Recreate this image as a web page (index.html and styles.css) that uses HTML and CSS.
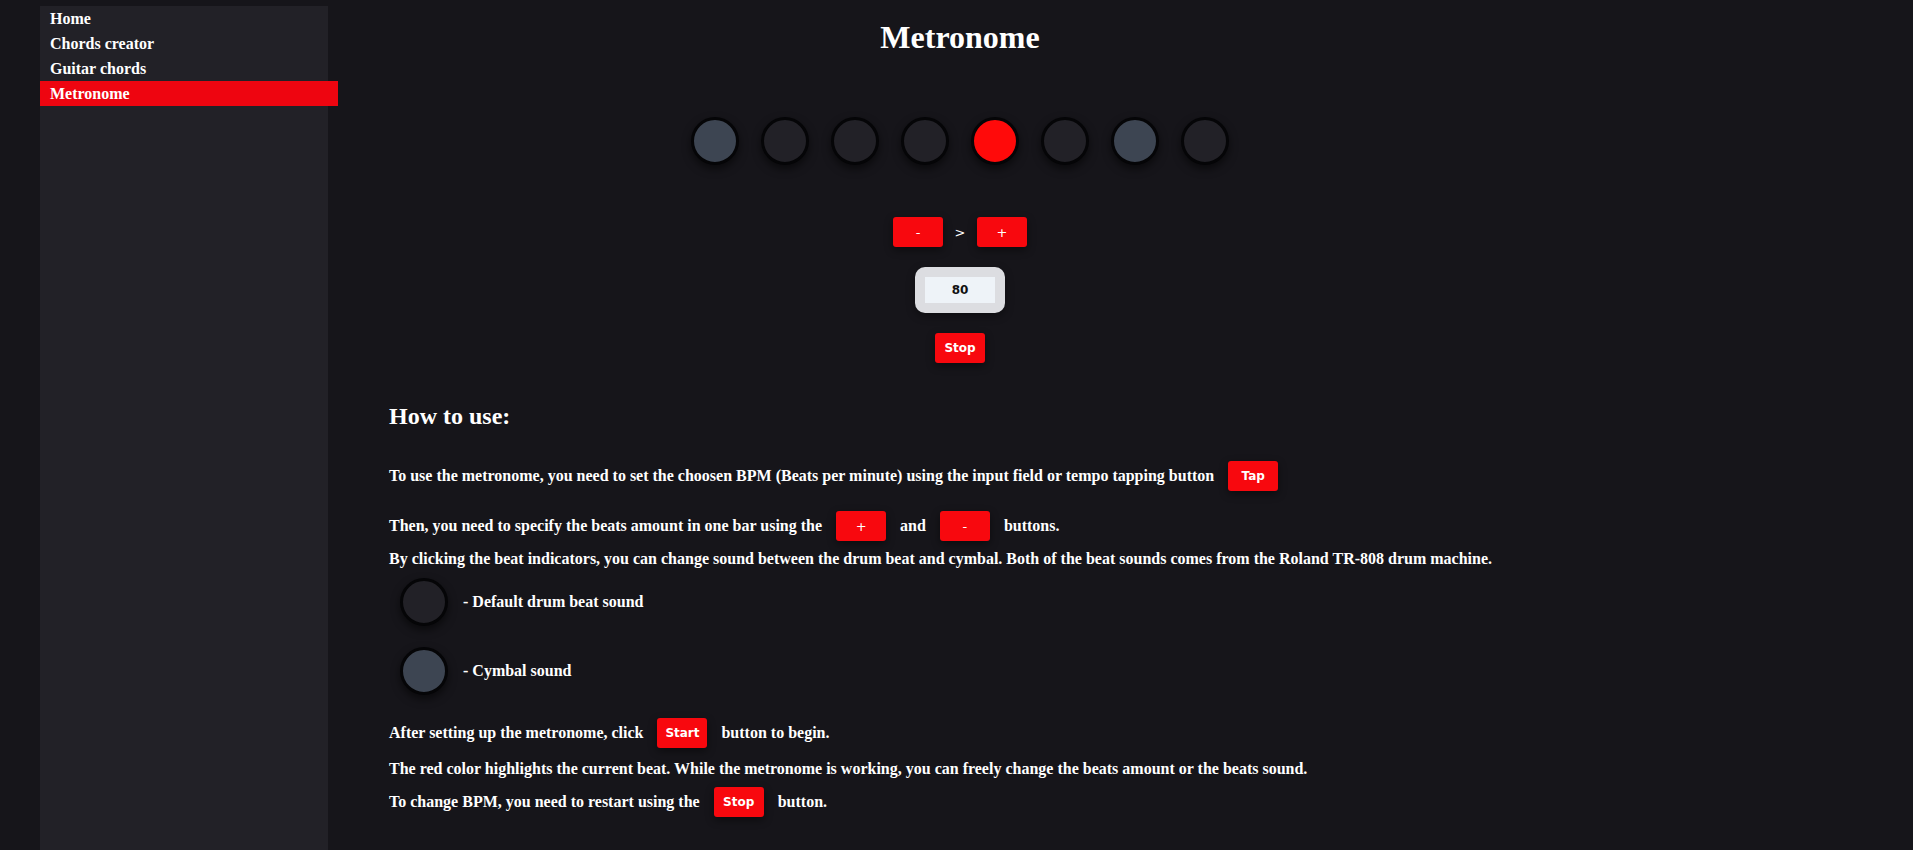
FILE: index.html
```html
<!DOCTYPE html>
<html lang="en">
<head>
<meta charset="utf-8">
<title>Metronome</title>
<link rel="stylesheet" href="styles.css">
</head>
<body>
<nav class="sidebar">
  <a class="nav-item">Home</a>
  <a class="nav-item">Chords creator</a>
  <a class="nav-item">Guitar chords</a>
  <a class="nav-item active">Metronome</a>
</nav>
<main class="main">
  <h1 class="title">Metronome</h1>
  <div class="beats">
    <span class="beat cymbal"></span>
    <span class="beat"></span>
    <span class="beat"></span>
    <span class="beat"></span>
    <span class="beat current"></span>
    <span class="beat"></span>
    <span class="beat cymbal"></span>
    <span class="beat"></span>
  </div>
  <div class="amount">
    <button class="btn thin">-</button>
    <span class="arrow">&gt;</span>
    <button class="btn thin">+</button>
  </div>
  <div class="bpm-box"><input class="bpm" type="text" value="80"></div>
  <button class="btn stop">Stop</button>

  <section class="howto">
    <h2 class="howto-title">How to use:</h2>
    <p class="line l1">To use the metronome, you need to set the choosen BPM (Beats per minute) using the input field or tempo tapping button <button class="btn inline">Tap</button></p>
    <p class="line l2">Then, you need to specify the beats amount in one bar using the <button class="btn inline thin">+</button> and <button class="btn inline thin">-</button> buttons.</p>
    <p class="line l3">By clicking the beat indicators, you can change sound between the drum beat and cymbal. Both of the beat sounds comes from the Roland TR-808 drum machine.</p>
    <div class="legend lg1"><span class="beat"></span><span>- Default drum beat sound</span></div>
    <div class="legend lg2"><span class="beat cymbal"></span><span>- Cymbal sound</span></div>
    <p class="line l4">After setting up the metronome, click <button class="btn inline">Start</button> button to begin.</p>
    <p class="line l5">The red color highlights the current beat. While the metronome is working, you can freely change the beats amount or the beats sound.</p>
    <p class="line l6">To change BPM, you need to restart using the <button class="btn inline">Stop</button> button.</p>
  </section>
</main>
</body>
</html>
```

FILE: styles.css
```css
html, body {
  margin: 0;
  padding: 0;
  height: 100%;
}
body {
  background: #16151a;
  color: #ffffff;
  font-family: "Liberation Serif", "Times New Roman", serif;
  font-weight: bold;
  display: flex;
  align-items: flex-start;
  overflow: hidden;
}
.sidebar {
  flex: 0 0 288px;
  width: 288px;
  min-width: 0;
  margin-left: 40px;
  margin-top: 6px;
  height: 844px;
  background: #222127;
  display: flex;
  flex-direction: column;
  align-items: flex-start;
}
.nav-item {
  display: block;
  height: 25px;
  line-height: 25px;
  padding-left: 10px;
  font-size: 16px;
  color: #ffffff;
}
.nav-item.active {
  background: #ee0510;
  width: 288px;
  flex: none;
}
.main {
  margin-left: 61px;
  width: 1142px;
  flex: none;
  display: flex;
  flex-direction: column;
  align-items: center;
}
.title {
  font-size: 32px;
  margin: 19px 0 0;
  line-height: 36px;
}
.beats {
  display: flex;
  gap: 22px;
  margin-top: 62px;
}
.beat {
  box-sizing: border-box;
  width: 48px;
  height: 48px;
  border-radius: 50%;
  border: 3px solid #050507;
  background: #222127;
  box-shadow: 0 4px 8px rgba(0,0,0,0.55);
  flex: 0 0 auto;
}
.beat.cymbal { background: #3d4552; }
.beat.current { background: #ff0a0a; }
.amount {
  display: flex;
  align-items: center;
  margin-top: 52px;
}
.arrow {
  font-family: "DejaVu Sans", Verdana, sans-serif;
  font-weight: normal;
  font-size: 13px;
  width: 34px;
  text-align: center;
}
.btn {
  box-sizing: border-box;
  width: 50px;
  height: 30px;
  border: none;
  border-radius: 3px;
  background: #f8080e;
  color: #ffffff;
  font-family: "DejaVu Sans", Verdana, sans-serif;
  font-weight: bold;
  font-size: 12px;
  padding: 0;
  box-shadow: 0 3px 8px rgba(0,0,0,0.45);
}
.btn.thin { font-weight: normal; font-size: 13px; }
.bpm-box {
  box-sizing: border-box;
  width: 90px;
  height: 46px;
  margin-top: 20px;
  background: #dcdde1;
  border-radius: 10px;
  display: flex;
  align-items: center;
  justify-content: center;
  box-shadow: 0 3px 8px rgba(0,0,0,0.4);
}
.bpm {
  box-sizing: border-box;
  width: 70px;
  height: 26px;
  border: none;
  background: #eef3f8;
  text-align: center;
  font-family: "DejaVu Sans", Verdana, sans-serif;
  font-weight: bold;
  font-size: 12px;
  color: #111;
  padding: 0;
}
.stop { margin-top: 20px; }
.howto {
  align-self: stretch;
  margin-top: 39px;
  font-size: 16px;
}
.howto-title {
  font-size: 24px;
  margin: 0;
  line-height: 28px;
}
.line {
  margin: 0;
  min-height: 30px;
  display: flex;
  align-items: center;
  white-space: pre;
}
.line .btn { margin: 0 10px; }
.l1 { margin-top: 31px; }
.l2 { margin-top: 20px; }
.l3 { margin-top: 3px; }
.legend {
  display: flex;
  align-items: center;
  gap: 15px;
  padding-left: 11px;
}
.lg1 { margin-top: 4px; }
.lg2 { margin-top: 21px; }
.l4 { margin-top: 23px; }
.l5 { margin-top: 6px; }
.l6 { margin-top: 3px; }
```
